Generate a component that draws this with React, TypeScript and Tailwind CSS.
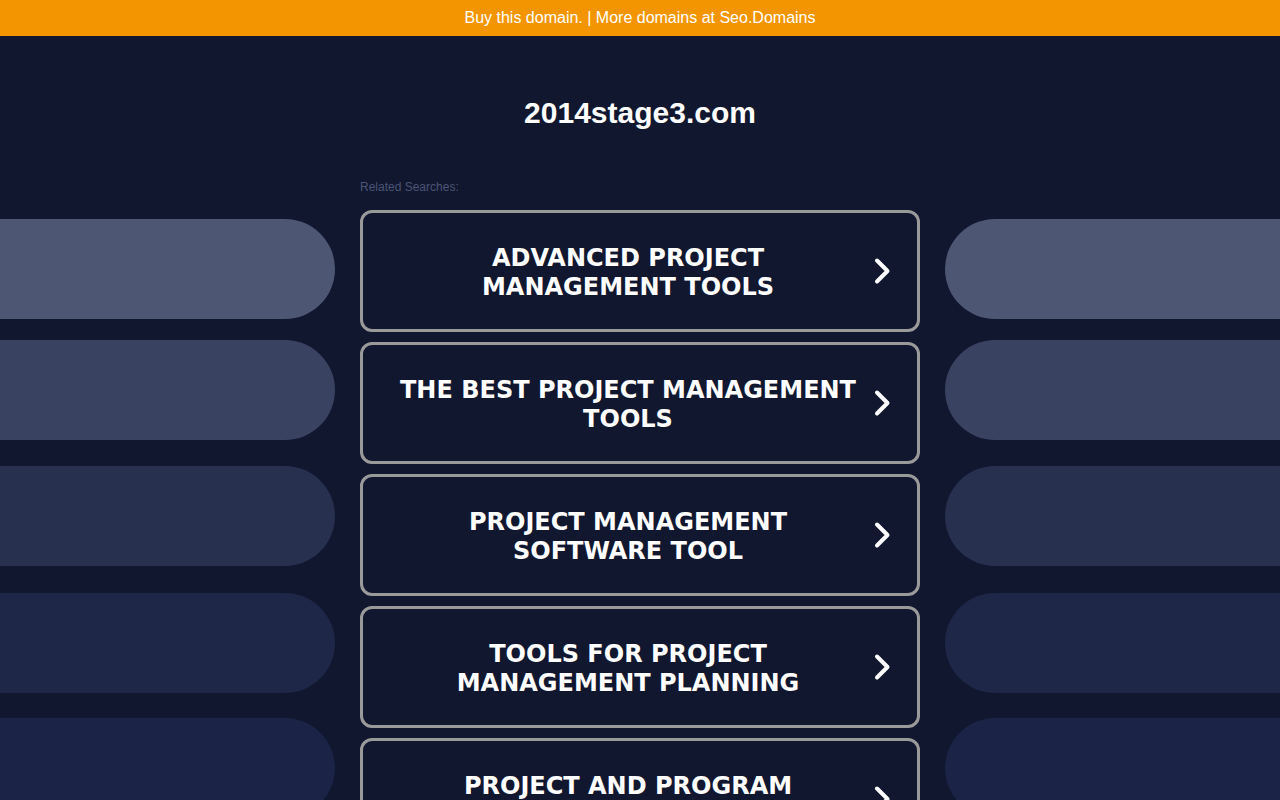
import React from "react";

const items = [
  "ADVANCED PROJECT MANAGEMENT TOOLS",
  "THE BEST PROJECT MANAGEMENT TOOLS",
  "PROJECT MANAGEMENT SOFTWARE TOOL",
  "TOOLS FOR PROJECT MANAGEMENT PLANNING",
  "PROJECT AND PROGRAM MANAGEMENT",
];

function Chevron() {
  return (
    <svg width="20" height="28" viewBox="0 0 20 28" className="shrink-0">
      <path d="M5 3.5 L15.5 14 L5 24.5" fill="none" stroke="white" strokeWidth="4" strokeLinecap="round" strokeLinejoin="round" />
    </svg>
  );
}

function Pills({ side }: { side: "left" | "right" }) {
  const round = side === "left" ? "rounded-r-[50px]" : "rounded-l-[50px]";
  return (
    <div className="flex flex-col pt-[41px]">
      <div className={`h-[100px] bg-[#4d5673] ${round}`} />
      <div className={`h-[100px] mt-[21px] bg-[#3a4261] ${round}`} />
      <div className={`h-[100px] mt-[26px] bg-[#283050] ${round}`} />
      <div className={`h-[100px] mt-[27px] bg-[#1e2747] ${round}`} />
      <div className={`h-[100px] mt-[25px] bg-[#1b2446] ${round}`} />
    </div>
  );
}

export default function App() {
  return (
    <div className="w-[1280px] h-[800px] overflow-hidden bg-[#11172f]" style={{ fontFamily: "Arial, 'Liberation Sans', sans-serif" }}>
      <div className="h-[36px] bg-[#f39500] flex items-center justify-center text-white text-[16px]">
        Buy this domain. | More domains at Seo.Domains
      </div>
      <div className="pt-[60px] h-[142px]">
        <h1 className="text-center text-white font-bold text-[30px] leading-[34px]">2014stage3.com</h1>
      </div>
      <div className="grid grid-cols-[335px_560px_335px] gap-x-[25px]">
        <Pills side="left" />
        <div className="flex flex-col">
          <div className="text-[12px] leading-[16px] pt-[1px] h-[16px] text-[#4b5575]">Related Searches:</div>
          <div className="mt-[16px] flex flex-col gap-[10px]">
            {items.map((t) => (
              <div
                key={t}
                className="h-[122px] border-[3px] border-[#9a9a9a] rounded-[12px] flex items-center pl-[21px] pr-[25px] bg-[#11172f]"
              >
                <div className="flex-1 flex justify-center pt-[4px]">
                  <div
                    className="max-w-[464px] text-center text-white font-bold text-[24px] leading-[29px]"
                    style={{ fontFamily: "'DejaVu Sans', Verdana, sans-serif" }}
                  >
                    {t}
                  </div>
                </div>
                <Chevron />
              </div>
            ))}
          </div>
        </div>
        <Pills side="right" />
      </div>
    </div>
  );
}
